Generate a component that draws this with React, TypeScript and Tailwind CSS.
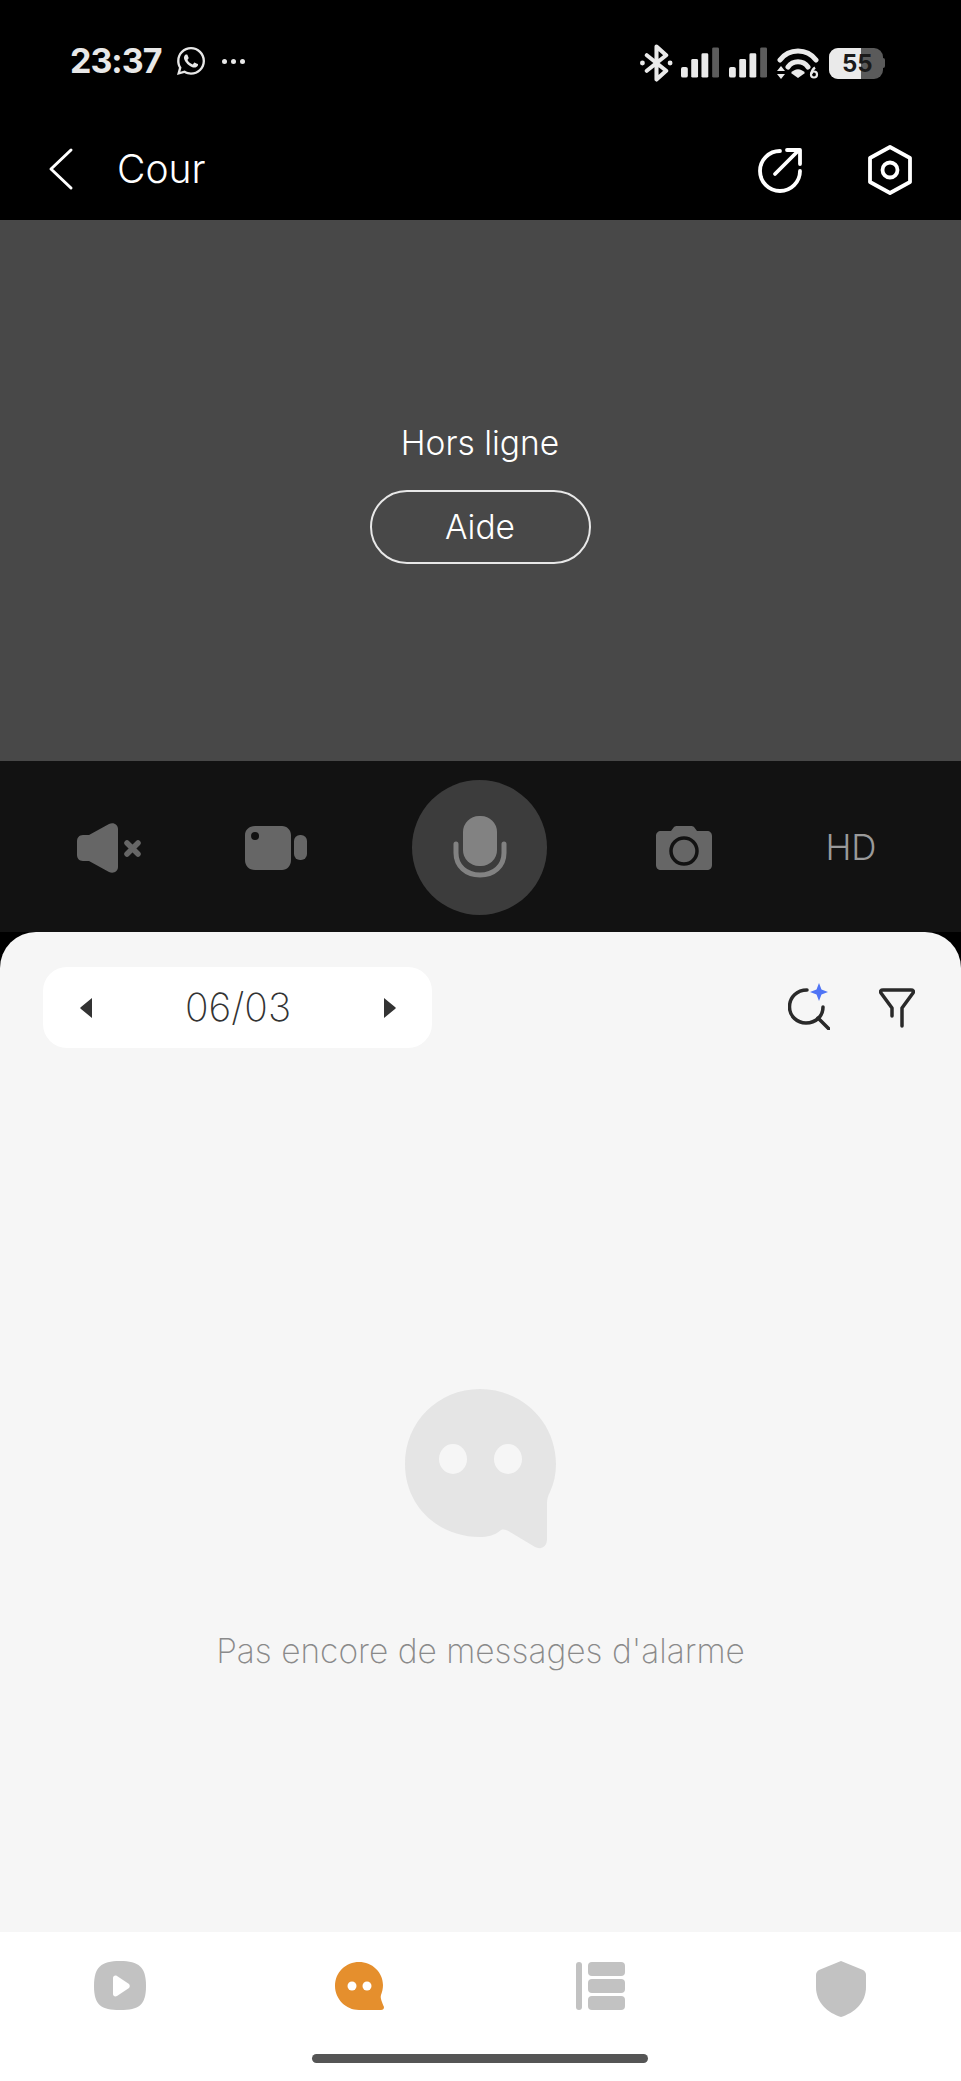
import { FaWhatsapp } from "react-icons/fa";

function Bluetooth() {
  return (
    <svg className="-mr-[2px]" width="33" height="38" viewBox="0 0 34 38" fill="none" stroke="#eaeaea" strokeWidth="4.2" strokeLinecap="round" strokeLinejoin="round">
      <path d="M7 11 L27 27 L17 36 L17 2 L27 11 L7 27" />
      <circle cx="2.500" cy="19" r="2.500" fill="#eaeaea" stroke="none" />
      <circle cx="31" cy="19" r="2.500" fill="#eaeaea" stroke="none" />
    </svg>
  );
}

function Signal() {
  return (
    <svg width="38" height="32" viewBox="0 0 39 32">
      <rect x="0" y="20" width="7" height="11" rx="2" fill="#eaeaea" />
      <rect x="10.500" y="12" width="7" height="19" rx="1.500" fill="#eaeaea" />
      <rect x="21" y="6" width="7" height="25" rx="1.500" fill="#eaeaea" />
      <rect x="32" y="0" width="7" height="31" rx="1.500" fill="#5c5c5c" />
    </svg>
  );
}

function Wifi() {
  return (
    <svg width="42" height="32" viewBox="0 0 42 32" fill="none">
      <path d="M3 13 C12 1 30 1 39 13" stroke="#eaeaea" strokeWidth="5" strokeLinecap="round" />
      <path d="M11 20 C16 13 26 13 31 20" stroke="#eaeaea" strokeWidth="5" strokeLinecap="round" />
      <path d="M14 26 C18 21 24 21 28 26 L21 31 Z" fill="#eaeaea" />
      <path d="M4 19 L8 24 H0 Z M4 32 L8 27 H0 Z" fill="#eaeaea" />
      <circle cx="37" cy="27.500" r="3" stroke="#eaeaea" strokeWidth="2.200" />
      <path d="M34.500 27 C34.500 24 36 22 38 20.500" stroke="#eaeaea" strokeWidth="2.200" />
    </svg>
  );
}

function Battery() {
  return (
    <div className="relative flex h-[31px] w-[56px] items-center">
      <div className="flex h-full w-[54px] overflow-hidden rounded-[9px] bg-[#5a5a5a]">
        <div className="h-full w-[32px] bg-[#eaeaea]" />
      </div>
      <div className="h-[10px] w-[2px] rounded-r bg-[#5a5a5a]" />
      <span className="absolute left-[13px] top-[1px] text-[24px] leading-[29px] font-bold text-[#1a1a1a]">55</span>
    </div>
  );
}

function StatusBar() {
  return (
    <div className="flex h-[120px] items-start justify-between pl-[70px] pr-[76px] pt-[42px]">
      <div className="flex items-center">
        <span className="text-[34px] leading-[38px] font-bold tracking-[-1px] text-[#e8e8e8]">23:37</span>
        <FaWhatsapp className="ml-[14px] text-[32px] text-[#e8e8e8]" />
        <div className="ml-[15px] flex gap-[4px]">
          <span className="size-[5px] rounded-full bg-[#e8e8e8]" />
          <span className="size-[5px] rounded-full bg-[#e8e8e8]" />
          <span className="size-[5px] rounded-full bg-[#e8e8e8]" />
        </div>
      </div>
      <div className="flex items-center gap-[10px] pt-[2px]">
        <Bluetooth />
        <Signal />
        <Signal />
        <Wifi />
        <Battery />
      </div>
    </div>
  );
}

function Header() {
  return (
    <div className="flex h-[100px] items-start justify-between pl-[48px] pr-[47px] pt-[24px]">
      <div className="flex items-center">
        <svg width="26" height="44" viewBox="0 0 26 44" fill="none" stroke="white" strokeWidth="3" strokeLinecap="round" strokeLinejoin="round">
          <path d="M23 3 L3 22 L23 41" />
        </svg>
        <span className="ml-[43px] text-[39px] leading-[50px] font-light text-white">Cour</span>
      </div>
      <div className="flex items-center gap-[63px]">
        <svg width="46" height="46" viewBox="0 0 46 46" fill="none" stroke="white" strokeWidth="3.8" strokeLinecap="round" strokeLinejoin="round">
          <path d="M23 4 A20 20 0 1 0 43 24" />
          <path d="M18 27 L42 3" />
          <path d="M30 3 H43 V17" />
        </svg>
        <svg width="48" height="52" viewBox="0 0 48 52" fill="none" stroke="white" strokeWidth="3.8" strokeLinejoin="round">
          <path d="M24 3 L44 14 V38 L24 49 L4 38 V14 Z" />
          <circle cx="24" cy="26" r="7.500" />
        </svg>
      </div>
    </div>
  );
}

function VideoArea() {
  return (
    <div className="flex h-[541px] flex-col items-center bg-[#484848] pr-[1px] pt-[200px] text-white">
      <div className="text-[33.500px] leading-[46px] font-light">Hors ligne</div>
      <div className="mt-[24px] flex h-[74px] w-[221px] items-center justify-center rounded-full border-2 border-[#e8e8e8] text-[33.500px] font-light">
        Aide
      </div>
    </div>
  );
}

function Controls() {
  return (
    <div className="grid h-[171px] grid-cols-[412px_136px_413px] items-center bg-[#121212] pt-[2px]">
      <div className="flex items-center justify-between pl-[67px] pr-[94px]">
        <div className="flex w-[84px] justify-center">
          <svg width="64" height="50" viewBox="0 0 64 50" fill="#666666">
            <path d="M6 12 H12 L32 1 C37 -1 41 2 41 6 V44 C41 48 37 51 32 49 L12 38 H6 C2 38 0 35 0 32 V18 C0 15 2 12 6 12 Z" />
            <path d="M50 20 L61 31 M61 20 L50 31" stroke="#666666" strokeWidth="5.500" strokeLinecap="round" />
          </svg>
        </div>
        <div className="flex w-[84px] justify-center">
          <svg width="62" height="44" viewBox="0 0 62 44" fill="#666666">
            <path fillRule="evenodd" d="M10 0 H37 C42 0 46 4 46 9 V34 C46 40 42 44 37 44 H10 C4 44 0 40 0 34 V9 C0 4 4 0 10 0 Z M10 6 A4 4 0 1 0 10.100 14 A4 4 0 1 0 10 6 Z" />
            <rect x="49" y="9" width="13" height="25" rx="6" />
          </svg>
        </div>
      </div>
      <div className="flex size-[135px] items-center justify-center rounded-full bg-[#3c3c3c]">
        <svg width="54" height="64" viewBox="0 0 54 64" fill="none">
          <rect x="10" y="0" width="34" height="50" rx="16" fill="#828282" />
          <path d="M3 28 V37 C3 50 13 59 27 59 C41 59 51 50 51 37 V28" stroke="#828282" strokeWidth="5" strokeLinecap="round" />
        </svg>
      </div>
      <div className="flex items-center justify-between pl-[94px] pr-[68px]">
        <div className="flex w-[84px] justify-center">
          <svg width="56" height="44" viewBox="0 0 56 44">
            <path fill="#666666" d="M5 5 H15 L18 1 C19 0 20 0 21 0 H35 C36 0 37 0 38 1 L41 5 H51 C54 5 56 7 56 10 V39 C56 42 54 44 51 44 H5 C2 44 0 42 0 39 V10 C0 7 2 5 5 5 Z" />
            <circle cx="28" cy="25" r="13" fill="#666666" stroke="#121212" strokeWidth="3.500" />
          </svg>
        </div>
        <div className="flex w-[84px] justify-center text-[35px] leading-none font-light text-[#9a9a9a]">HD</div>
      </div>
    </div>
  );
}

function DateBar() {
  return (
    <div className="flex items-start justify-between pl-[43px] pr-[46px] pt-[35px]">
      <div className="flex h-[81px] w-[389px] items-center justify-between rounded-[24px] bg-white pl-[37px] pr-[36px]">
        <svg width="12" height="22" viewBox="0 0 12 22" fill="#333333">
          <path d="M12 1 V21 L1 12 C0 11.500 0 10.500 1 10 Z" />
        </svg>
        <span className="text-[39px] font-extralight text-[#333333]">06/03</span>
        <svg width="12" height="22" viewBox="0 0 12 22" fill="#333333">
          <path d="M0 1 V21 L11 12 C12 11.500 12 10.500 11 10 Z" />
        </svg>
      </div>
      <div className="flex items-start gap-[49px] pt-[16px]">
        <svg width="42" height="47" viewBox="0 0 42 47" fill="none">
          <path d="M19 7 C9 7 1.500 14 1.500 24 C1.500 33 9 40 18 40 C28 40 35 33 35 24" stroke="#2a2a2a" strokeWidth="3.500" strokeLinecap="round" />
          <path d="M30 35 L41 46" stroke="#2a2a2a" strokeWidth="3.500" strokeLinecap="round" />
          <path d="M31 0 L33.500 6.500 L40 9 L33.500 11.500 L31 18 L28.500 11.500 L22 9 L28.500 6.500 Z" fill="#4f74f5" />
        </svg>
        <svg className="mt-[5px]" width="36" height="40" viewBox="0 0 36 40" fill="none" stroke="#2a2a2a" strokeWidth="3.500" strokeLinecap="round" strokeLinejoin="round">
          <path d="M13 28 V20 L2 5 C1 3 2 2 4 2 H32 C34 2 35 3 34 5 L23 20 V38" />
        </svg>
      </div>
    </div>
  );
}

function EmptyState() {
  return (
    <div className="flex flex-col items-center pt-[341px]">
      <svg width="152" height="160" viewBox="0 0 152 160">
        <path fill="#e5e5e5" d="M75 0 C117 0 151 33 151 75 C151 85 149 94 145 103 C143 107 142 110 142 114 V150 C142 158 136 161 130 158 L105 143 C102 141 99 140 96 141 C89 147 82 148 75 148 C33 148 0 117 0 75 C0 33 33 0 75 0 Z" />
        <ellipse cx="48" cy="70" rx="14" ry="15" fill="#f6f6f6" />
        <ellipse cx="103" cy="70" rx="14" ry="15" fill="#f6f6f6" />
      </svg>
      <div className="mt-[79px] text-[33.500px] leading-[46px] font-extralight text-[#8a8a8a]">Pas encore de messages d'alarme</div>
    </div>
  );
}

function BottomNav() {
  return (
    <div className="bg-white">
      <div className="grid h-[122px] grid-cols-4 items-start pt-[29px]">
        <div className="flex justify-center">
          <svg width="54" height="50" viewBox="0 0 54 50">
            <path fill="#c2c2c2" d="M27 0 C46 0 53 6 53 25 C53 44 46 49 27 49 C8 49 1 44 1 25 C1 6 8 0 27 0 Z" />
            <path fill="white" d="M20 17 C20 15 22 14 24 15 L36 23 C37 24 37 26 36 27 L24 35 C22 36 20 35 20 33 Z" />
          </svg>
        </div>
        <div className="flex justify-center">
          <svg width="50" height="50" viewBox="0 0 50 50">
            <path fill="#e58f2d" d="M24 1 C37 1 48 11 48 24 C48 28 47 31 46 34 C45 37 47 41 49 46 C49 48 48 49 46 49 H24 C11 49 0 38 0 25 C0 11 11 1 24 1 Z" />
            <circle cx="17" cy="25" r="4.500" fill="white" />
            <circle cx="32" cy="25" r="4.500" fill="white" />
          </svg>
        </div>
        <div className="flex justify-center">
          <svg width="50" height="50" viewBox="0 0 50 50" fill="#c2c2c2">
            <rect x="0" y="1" width="6" height="48" rx="3" />
            <rect x="12" y="1" width="37" height="14" rx="4" />
            <rect x="12" y="18" width="37" height="14" rx="4" />
            <rect x="12" y="35" width="37" height="14" rx="4" />
          </svg>
        </div>
        <div className="flex justify-center">
          <svg width="50" height="56" viewBox="0 0 50 56">
            <path fill="#c2c2c2" d="M25 0 L47 9 C49 10 50 12 50 14 V26 C50 42 38 52 25 56 C12 52 0 42 0 26 V14 C0 12 1 10 3 9 Z" />
          </svg>
        </div>
      </div>
      <div className="flex h-[27px] justify-center pr-[1px]">
        <div className="h-[9px] w-[336px] rounded-full bg-[#555555]" />
      </div>
    </div>
  );
}

export default function App() {
  return (
    <main className="h-[2081px] w-[961px] overflow-hidden bg-black font-['Inter',sans-serif]">
      <StatusBar />
      <Header />
      <VideoArea />
      <Controls />
      <section className="h-[1000px] rounded-t-[36px] bg-[#f6f6f6]">
        <DateBar />
        <EmptyState />
      </section>
      <BottomNav />
    </main>
  );
}
